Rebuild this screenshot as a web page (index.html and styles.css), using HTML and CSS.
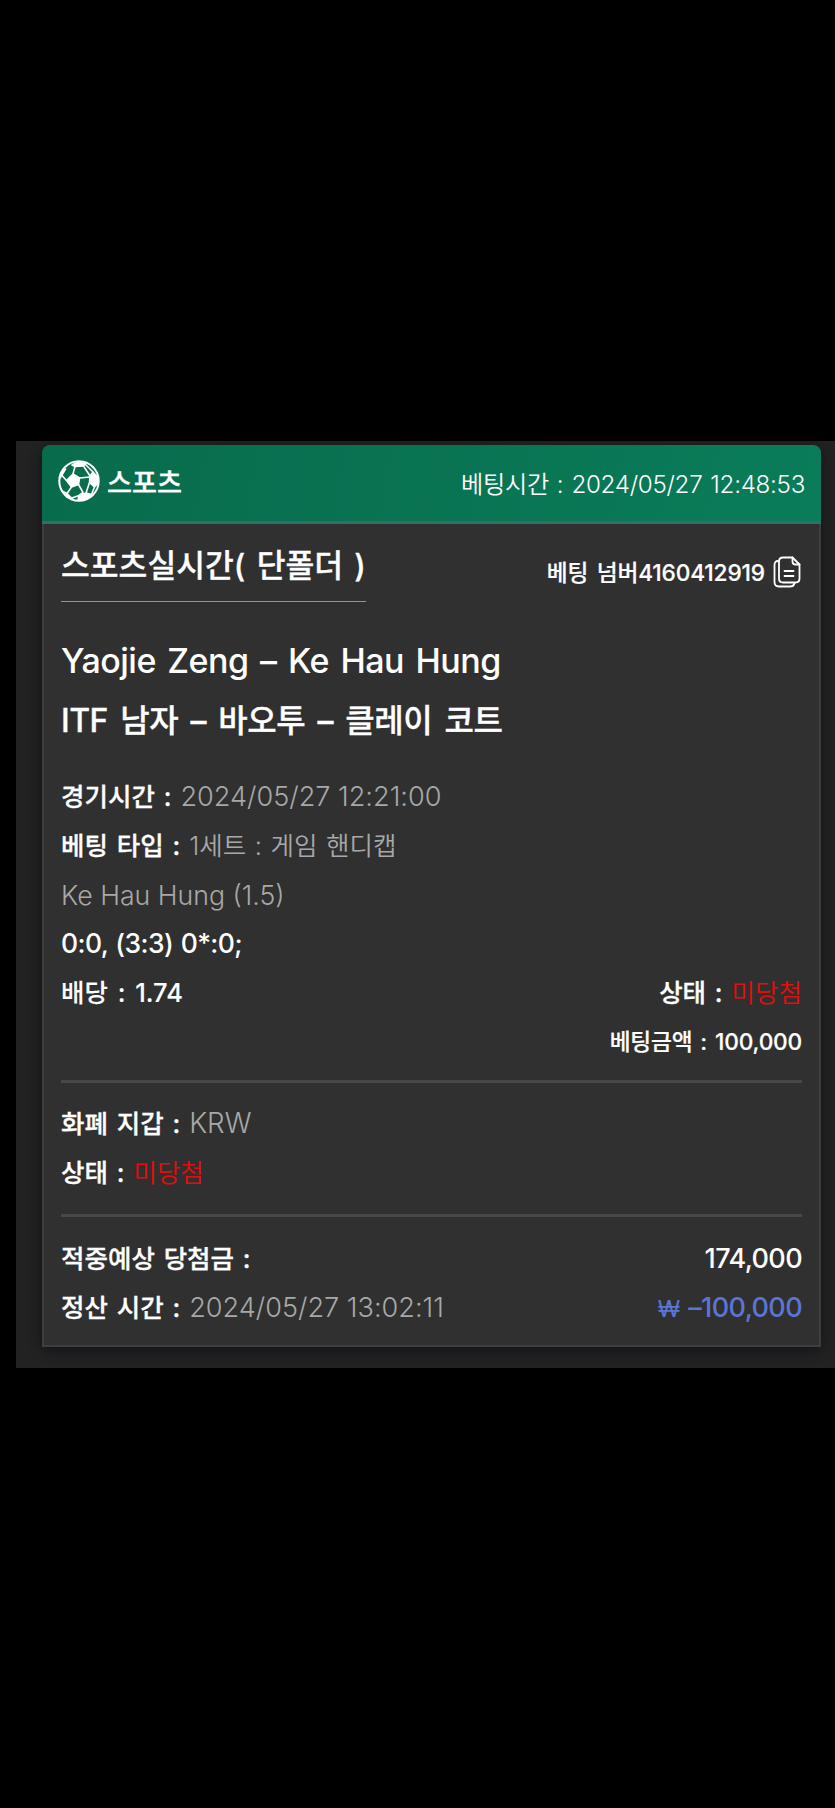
FILE: index.html
```html
<!DOCTYPE html>
<html lang="ko">
<head>
<meta charset="utf-8">
<title>베팅 내역</title>
<link rel="stylesheet" href="styles.css">
</head>
<body>
<main class="panel">
<article class="card">
<header class="card-head">
<div class="sport">
<svg class="ball" viewBox="0 0 42 42" fill="none" stroke="#fff" stroke-width="1.6" stroke-linejoin="round">
<circle cx="21" cy="21" r="19.7" stroke-width="2"/>
<path fill="#fff" d="M15 14L21.500 18L20.500 24.500L13.500 27L8.500 20.500Z"/>
<path fill="#fff" d="M14 5L20 2L27.500 3.500L25.500 6L17 6.500Z"/>
<path fill="#fff" d="M32 16L35 12L39.500 17L39.500 24L36.500 27L31.500 22.500Z"/>
<path fill="#fff" d="M21 35.500L28 33L33.500 34.500L28 39L20 40Z"/>
<path fill="#fff" d="M4 31L9 33.500L14.500 39L9 37Z"/>
<path fill="#fff" d="M2 18L4.500 14L7.500 9L3.500 13Z"/>
<path d="M15 14L17 6.500M25.500 6L32 16M21.500 18L32 17M20.500 24.500L25 32.500L21 35.500M28 33L31.500 22.500M13.500 27L9 33.500M8.500 20.500L3.500 15M27 4L35 12M33.500 34.500L36.500 27M14 38L21 35.500"/>
</svg>
<span class="sport-name">스포츠</span>
</div>
<div class="bet-time">베팅시간 : 2024/05/27 12:48:53</div>
</header>
<section class="card-body">
<div class="title-row">
<h1 class="title">스포츠실시간( 단폴더 )</h1>
<div class="number"><span>베팅 넘버4160412919</span>
<svg class="copy" viewBox="0 0 28 32" fill="none" stroke="#fff" stroke-width="1.8" stroke-linejoin="round" stroke-linecap="round">
<path d="M10 1.500H19.500L26.500 8.500V22.500Q26.500 26.500 22.500 26.500H10Q6 26.500 6 22.500V5.500Q6 1.500 10 1.500Z"/>
<path d="M19.500 1.500V5.500Q19.500 8.500 22.500 8.500H26.500M6 5H5Q1.500 5 1.500 9V26Q1.500 30.500 6 30.500H17Q21 30.500 21.500 27M11.500 15H20.500M11.500 20H20.500"/>
</svg></div>
</div>
<div class="match">
<div class="players">Yaojie Zeng – Ke Hau Hung</div>
<div class="league">ITF 남자 – 바오투 – 클레이 코트</div>
</div>
<div class="rows">
<div class="row"><div><b>경기시간 :</b><span class="val num">2024/05/27 12:21:00</span></div></div>
<div class="row"><div><b>베팅 타입 :</b><span class="val type">1세트 : 게임 핸디캡</span></div></div>
<div class="row"><span class="val pick">Ke Hau Hung (1.5)</span></div>
<div class="row"><b class="score">0:0, (3:3) 0*:0;</b></div>
<div class="row"><b class="odds">배당 : 1.74</b><div><b>상태 :</b><span class="val lost">미당첨</span></div></div>
<div class="row end"><b class="stake">베팅금액 : 100,000</b></div>
</div>
<hr class="rule">
<div class="rows wallet">
<div class="row"><div><b>화폐 지갑 :</b><span class="val krw">KRW</span></div></div>
<div class="row"><div><b>상태 :</b><span class="val lost">미당첨</span></div></div>
</div>
<hr class="rule">
<div class="rows">
<div class="row"><b>적중예상 당첨금 :</b><b class="sum">174,000</b></div>
<div class="row"><div><b>정산 시간 :</b><span class="val num">2024/05/27 13:02:11</span></div><b class="sum loss"><span class="won">₩</span> –100,000</b></div>
</div>
</section>
</article>
</main>
</body>
</html>
```
FILE: styles.css
```css
* { box-sizing: border-box; }
body {
  margin: 0;
  min-height: 1808px;
  padding: 441px 0 0 16px;
  background: #000;
  color: #fff;
  font-family: Inter, "Noto Sans CJK KR", sans-serif;
}
.panel {
  height: 927px;
  padding: 4px 14px 0 26px;
  background: #222;
}
.card {
  height: 902px;
  border-radius: 8px 8px 0 0;
  box-shadow: 0 3px 12px #121317;
}
.card-head {
  display: flex;
  justify-content: space-between;
  height: 79px;
  padding: 0 16px;
  border-bottom: 3px solid #2f7168;
  border-radius: 8px 8px 0 0;
  background: linear-gradient(100deg, #086b4c, #0a7c59);
}
.sport { display: flex; align-items: center; gap: 7px; }
.ball { width: 42px; height: 42px; margin-top: -5px; }
.sport-name {
  font-size: 27.2px;
  font-weight: 500;
  line-height: 77px;
  -webkit-text-stroke: .3px;
}
.bet-time {
  font-size: 24.2px;
  font-weight: 350;
  line-height: 79px;
  letter-spacing: -.3px;
  word-spacing: 1.5px;
  white-space: nowrap;
}
.card-body {
  height: 823px;
  padding: 0 17px;
  border: 2px solid #3d3d42;
  border-top: 0;
  background: #303030;
}
.title-row { display: flex; justify-content: space-between; }
.title {
  height: 78px;
  margin: 0;
  border-bottom: 1px solid #949494;
  font-size: 31.3px;
  font-weight: 500;
  line-height: 84px;
  white-space: nowrap;
  word-spacing: 3px;
  -webkit-text-stroke: .3px;
}
.number {
  display: flex;
  align-items: center;
  gap: 8px;
  height: 95px;
  font-size: 22.7px;
  font-weight: 500;
  letter-spacing: -.15px;
  word-spacing: 2.5px;
  -webkit-text-stroke: .2px;
}
.copy { width: 28px; height: 32px; margin-right: 1px; }
.match {
  padding: 12px 0 21px;
  font-size: 32px;
  font-weight: 500;
  line-height: 60px;
  white-space: nowrap;
}
.players { font-size: 34px; letter-spacing: -.5px; word-spacing: 2.9px; }
.league { letter-spacing: -.5px; word-spacing: 4.3px; -webkit-text-stroke: .3px; }
.rows { font-size: 25.5px; }
.row {
  display: flex;
  justify-content: space-between;
  height: 49px;
  line-height: 49px;
  white-space: nowrap;
}
.row.end { justify-content: flex-end; }
b { font-weight: 500; word-spacing: 2px; -webkit-text-stroke: .3px; }
.val { margin-left: 9px; color: #a8a8a8; font-weight: 350; -webkit-text-stroke: 0; }
.num { font-size: 27.1px; font-weight: 300; }
.type { word-spacing: 1.4px; }
.krw { font-size: 27.7px; font-weight: 300; }
.pick { margin-left: 0; font-size: 26.7px; font-weight: 300; line-height: 51px; }
.score { font-size: 26.5px; letter-spacing: -.6px; word-spacing: 1px; -webkit-text-stroke: 0; }
.odds { word-spacing: 3px; -webkit-text-stroke: .1px; }
.lost { color: #e60c0c; }
.stake { font-size: 22.7px; letter-spacing: -.2px; word-spacing: 2.2px; -webkit-text-stroke: .2px; }
.sum { font-size: 27px; letter-spacing: -.6px; -webkit-text-stroke: 0; }
.loss { color: #5a76d2; }
.won { font-size: 23.5px; font-weight: 400; }
.rule { height: 3px; margin: 14px 0 16px; border: 0; background: #484848; }
.wallet + .rule { margin: 17px 0; }
```
